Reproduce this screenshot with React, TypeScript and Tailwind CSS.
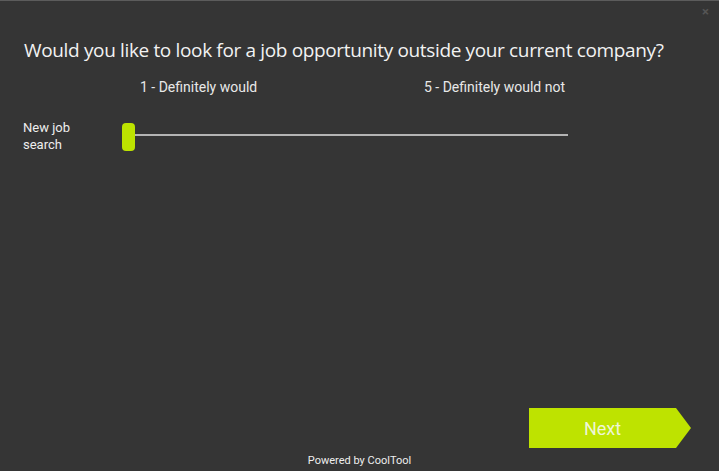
import React from "react";

const titleFont = { fontFamily: '"Open Sans", "DejaVu Sans", sans-serif' };
const bodyFont = { fontFamily: 'Roboto, "Liberation Sans", sans-serif' };

function Slider() {
  return (
    <div className="relative h-[28px] w-[446px] pt-[11px]">
      <div className="ml-[13px] h-[2px] bg-[#b4b4b4]" />
      <div className="absolute left-0 top-0 h-[28px] w-[13px] rounded-[4px] bg-[#bde300]" />
    </div>
  );
}

export default function App() {
  return (
    <div
      className="relative flex h-[471px] w-[719px] flex-col border-t border-[#5c5c5c] bg-[#353535] text-[#f2f2f2]"
      style={bodyFont}
    >
      <span className="absolute right-[10px] top-[1px] text-[13px] font-bold text-[#555]">×</span>

      <h1
        className="mt-[36px] whitespace-nowrap pl-[24px] text-[19px] leading-[26px] tracking-[-0.35px]"
        style={titleFont}
      >
        Would you like to look for a job opportunity outside your current company?
      </h1>

      <div className="mt-[15px] flex pl-[140px] text-[14px] leading-[18px] text-[#e8e8e8]">
        <span className="w-[284px]">1 - Definitely would</span>
        <span>5 - Definitely would not</span>
      </div>

      <div className="mt-[23px] flex items-start pl-[23px]">
        <div className="w-[99px] text-[13px] leading-[17px] text-[#eeeeee]">
          New job
          <br />
          search
        </div>
        <div className="mt-[4px]">
          <Slider />
        </div>
      </div>

      <div className="mt-auto flex justify-end pr-[28px]">
        <button className="flex h-[40px] w-[162px] items-center bg-[#bee300] [clip-path:polygon(0_0,147px_0,162px_20px,147px_40px,0_40px)]">
          <span className="w-[147px] text-center text-[18px] text-[#eef6d8]">Next</span>
        </button>
      </div>

      <div className="mb-[3px] mt-[6px] text-center text-[11px] leading-[14px] text-[#eeeeee]">
        Powered by CoolTool
      </div>
    </div>
  );
}
